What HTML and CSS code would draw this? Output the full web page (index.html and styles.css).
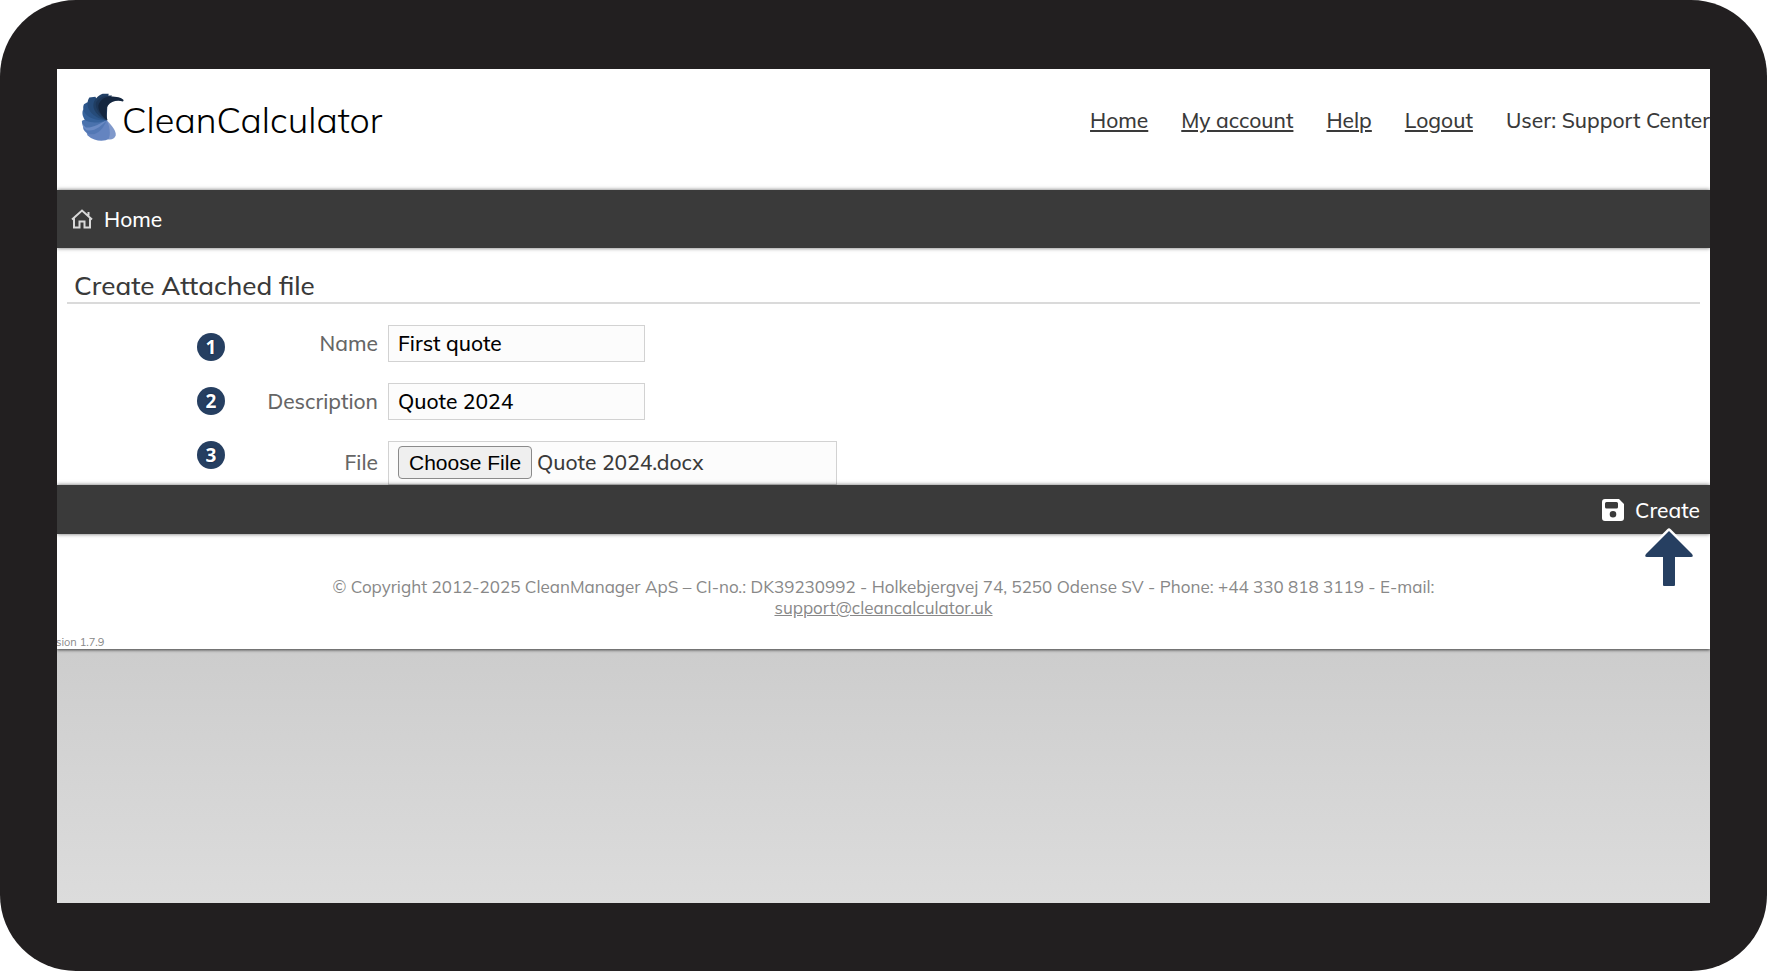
FILE: index.html
```html
<!DOCTYPE html>
<html lang="en">
<head>
<meta charset="utf-8">
<title>CleanCalculator – Create Attached file</title>
<link rel="stylesheet" href="styles.css">
</head>
<body>
<div class="device">
  <div class="screen">
    <header class="header">
      <div class="brand">
        <svg class="brand-mark" viewBox="21 21 132 147" aria-hidden="true">
          <path fill="#8099cb" d="M98 104C112 118 128 136 125 150C121 164 104 164 92 158L84 110Z"/>
          <path fill="#6484c0" d="M98 104C108 122 110 146 104 160C94 168 62 170 41 150L38 144Z"/>
          <path fill="#5378b5" d="M98 104C88 130 70 150 46 146C34 142 28 134 27 126L60 100Z"/>
          <path fill="#6b8bc4" d="M98 104C84 120 60 140 38 134C28 128 23 118 24 107L30 108Z"/>
          <path fill="#4a72ad" d="M98 104C80 112 56 128 36 126C26 118 22 110 24 106L60 90Z"/>
          <path fill="#36629b" d="M98 104C80 112 54 114 36 106C26 98 24 84 26 76L30 70L60 60Z"/>
          <path fill="#2c568b" d="M98 104C80 106 54 102 40 90C26 78 26 64 30 56L40 50L70 60Z"/>
          <path fill="#264b79" d="M98 104C76 102 52 88 45 72C38 58 40 46 46 36L64 34L80 60Z"/>
          <path fill="#203e63" d="M98 104C80 98 58 80 58 60C58 44 72 30 86 25L104 25L103 32L80 60Z"/>
          <path fill="#1c3556" d="M98 104C80 92 62 68 66 52C72 38 90 28 114 30L100 60Z"/>
          <path fill="#14263f" d="M101 105C84 94 72 76 73 60C78 42 94 32 116 33C134 34 146 39 149 44L147 48C130 42 110 48 102 60C92 74 97 92 101 105Z"/>
        </svg>
        <span class="brand-name">CleanCalculator</span>
      </div>
      <nav class="account" aria-label="Account">
        <a href="#">Home</a>
        <a href="#">My account</a>
        <a href="#">Help</a>
        <a href="#">Logout</a>
        <span>User: Support Center</span>
      </nav>
    </header>

    <nav class="bar menu" aria-label="Main">
      <a class="bar-item" href="#">
        <svg class="home-icon" viewBox="0 0 22 20" aria-hidden="true">
          <path d="M1 10.500L11 1.500L21 10.500M17.500 6.500V3M3 9.500V18.500H8.500V12.500H13.500V18.500H19V9.500"/>
        </svg>
        <span>Home</span>
      </a>
    </nav>

    <main class="content">
      <h1 class="title">Create Attached file</h1>
      <form class="form" id="attach">
        <ol class="steps">
          <li>1</li>
          <li>2</li>
          <li>3</li>
        </ol>
        <div class="fields">
          <label for="name">Name</label>
          <input class="field" id="name" type="text" value="First quote">
          <label for="description">Description</label>
          <input class="field" id="description" type="text" value="Quote 2024">
          <label for="file">File</label>
          <input class="field field-file" id="file" type="file">
        </div>
      </form>
    </main>

    <div class="bar actions">
      <button class="bar-item create" type="submit" form="attach">
        <svg class="save-icon" viewBox="0 0 22 22" aria-hidden="true">
          <path fill="#fff" fill-rule="evenodd" d="M3 0H17L22 5V19A3 3 0 0 1 19 22H3A3 3 0 0 1 0 19V3A3 3 0 0 1 3 0ZM4.500 3A1.500 1.500 0 0 0 3 4.500V8A1.500 1.500 0 0 0 4.500 9.500H14.500A1.500 1.500 0 0 0 16 8V4.500A1.500 1.500 0 0 0 14.500 3ZM11 12A3.300 3.300 0 1 0 11 18.600A3.300 3.300 0 1 0 11 12Z"/>
        </svg>
        <span>Create</span>
      </button>
      <svg class="pointer" viewBox="0 0 52 60" aria-hidden="true">
        <path d="M26 3L49 26Q51 29 48 29H32V57Q32 58 31 58H21Q20 58 20 57V29H4Q1 29 3 26Z"/>
      </svg>
    </div>

    <footer class="footer">
      <p class="legal">© Copyright 2012-2025 CleanManager ApS – CI-no.: DK39230992 - Holkebjergvej 74, 5250 Odense SV - Phone: +44 330 818 3119 - E-mail: <a href="mailto:support@cleancalculator.uk">support@cleancalculator.uk</a></p>
      <p class="version">Version 1.7.9</p>
    </footer>
  </div>
</div>
<script src="script.js"></script>
</body>
</html>
```
FILE: styles.css
```css
* {
  box-sizing: border-box;
}

body {
  margin: 0;
  background: #fff;
  color: #3a3a3a;
  font-family: Mulish, Muli, Lato, sans-serif;
  font-size: 21px;
  font-weight: 500;
  line-height: 28px;
}

.device {
  display: flex;
  min-height: 100vh;
  padding: 69px 57px 68px;
  border-radius: 76px;
  background: #221f20;
}

.screen {
  display: flex;
  flex: 1;
  flex-direction: column;
  min-width: 0;
  overflow: hidden;
  background: linear-gradient(#c6c6c6 60%, #cdcdcd 70%, #dcdcdc);
}

.header {
  display: flex;
  justify-content: space-between;
  height: 121px;
  padding: 23px 0 0 24px;
  background: #fff;
}

.brand {
  display: flex;
  align-items: flex-start;
}

.brand-mark {
  width: 44px;
  height: 50px;
}

.brand-name {
  margin-left: -3px;
  padding-top: 4px;
  color: #000;
  font-size: 36px;
  font-weight: 300;
  line-height: 48px;
}

.account {
  display: flex;
  gap: 33px;
  padding-top: 14px;
}

.account a {
  color: inherit;
}

.bar {
  position: relative;
  z-index: 1;
  display: flex;
  align-items: center;
  background: #3a3a3a;
  box-shadow: 0 0 4px rgba(0, 0, 0, 0.6);
}

.menu {
  height: 58px;
  padding: 0 14px;
}

.actions {
  justify-content: flex-end;
  height: 49px;
  padding: 0 10px;
}

.bar-item {
  display: flex;
  align-items: center;
  gap: 11px;
  padding: 0;
  border: 0;
  background: none;
  color: #fff;
  font: inherit;
  text-decoration: none;
}

.home-icon {
  width: 22px;
  height: 20px;
  fill: none;
  stroke: #d8d8d8;
  stroke-width: 2;
}

.save-icon {
  width: 22px;
  height: 22px;
}

.pointer {
  position: absolute;
  top: 43px;
  right: 15px;
  width: 52px;
  height: 60px;
  overflow: visible;
  fill: #263f61;
  stroke: #fff;
  stroke-width: 5;
  stroke-linejoin: round;
  paint-order: stroke;
}

.content {
  padding: 22px 10px 0;
  background: #fff;
}

.title {
  margin: 0;
  padding: 0 7px;
  border-bottom: 2px solid #dadada;
  font-size: 26px;
  font-weight: 500;
  line-height: 32px;
}

.form {
  display: flex;
  padding: 21px 0 0 130px;
}

.steps {
  display: flex;
  flex-direction: column;
  gap: 26px;
  margin: 0;
  padding: 8px 0 0;
  list-style: none;
}

.steps li {
  width: 28px;
  height: 28px;
  border-radius: 50%;
  background: #263f61;
  color: #fff;
  font-family: "Open Sans", sans-serif;
  font-size: 19px;
  font-weight: 700;
  line-height: 28px;
  text-align: center;
  text-shadow: 0 0 2px #0b1c3a;
}

.fields {
  display: grid;
  grid-template-columns: 153px auto;
  align-items: center;
  justify-items: start;
  gap: 21px 10px;
}

.fields label {
  justify-self: end;
  padding-bottom: 2px;
  color: #666;
}

.field {
  width: 257px;
  height: 37px;
  padding: 0 9px 1px;
  border: 1px solid #d2d2d2;
  border-radius: 0;
  background: #fcfcfc;
  color: #000;
  font: inherit;
}

.field-file {
  width: 449px;
  height: 44px;
  padding: 4px 9px;
  color: #3a3a3a;
}

.field-file::file-selector-button {
  height: 33px;
  margin: 0 5px 0 0;
  padding: 0 10px;
  border: 1px solid #8a8a8a;
  border-radius: 4px;
  background: #efefef;
  color: #000;
  font-family: "Liberation Sans", Arial, sans-serif;
  font-size: 21px;
  font-weight: 400;
}

.footer {
  background: #fff;
  box-shadow: 0 1px 3px rgba(0, 0, 0, 0.7);
  color: #888;
  font-size: 17px;
  font-weight: 400;
  line-height: 21px;
}

.legal {
  max-width: 1120px;
  margin: 0 auto;
  padding-top: 42px;
  text-align: center;
}

.legal a {
  color: inherit;
}

.version {
  margin: 18px 0 0 -18px;
  font-size: 11px;
  line-height: 13px;
}
```
FILE: script.js
```js
// Preselect the document that is attached to the quote.
const selection = new DataTransfer();
selection.items.add(new File(["quote"], "Quote 2024.docx"));
document.getElementById("file").files = selection.files;
```
